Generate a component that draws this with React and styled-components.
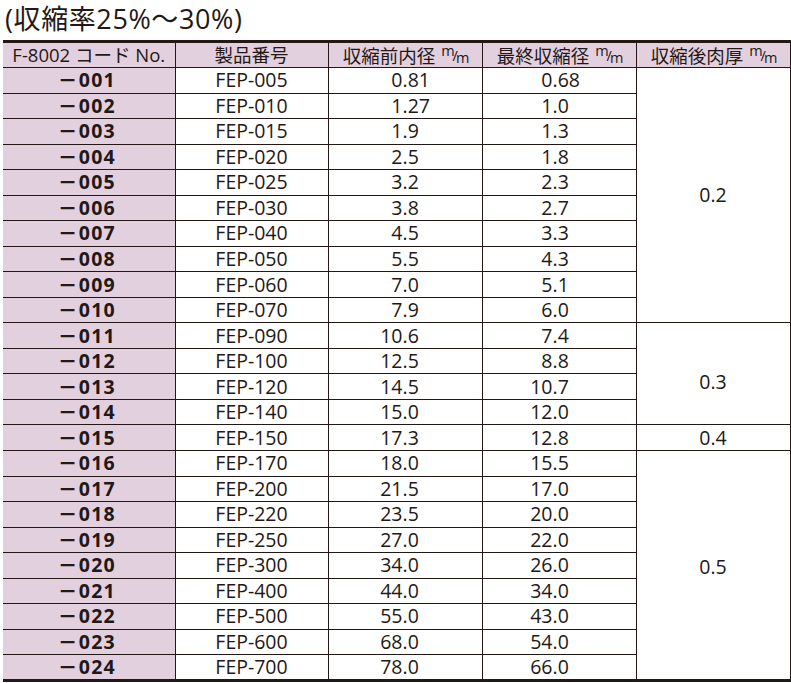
import { createGlobalStyle } from "styled-components";
import styled from "styled-components";

const rows = [
  ["001", "005", "0.81", "0.68"],
  ["002", "010", "1.27", "1.0"],
  ["003", "015", "1.9", "1.3"],
  ["004", "020", "2.5", "1.8"],
  ["005", "025", "3.2", "2.3"],
  ["006", "030", "3.8", "2.7"],
  ["007", "040", "4.5", "3.3"],
  ["008", "050", "5.5", "4.3"],
  ["009", "060", "7.0", "5.1"],
  ["010", "070", "7.9", "6.0"],
  ["011", "090", "10.6", "7.4"],
  ["012", "100", "12.5", "8.8"],
  ["013", "120", "14.5", "10.7"],
  ["014", "140", "15.0", "12.0"],
  ["015", "150", "17.3", "12.8"],
  ["016", "170", "18.0", "15.5"],
  ["017", "200", "21.5", "17.0"],
  ["018", "220", "23.5", "20.0"],
  ["019", "250", "27.0", "22.0"],
  ["020", "300", "34.0", "26.0"],
  ["021", "400", "44.0", "34.0"],
  ["022", "500", "55.0", "43.0"],
  ["023", "600", "68.0", "54.0"],
  ["024", "700", "78.0", "66.0"],
];

// wall thickness groups: first row index -> [span, value, extra top padding]
const thickness = {
  0: [10, "0.2", 0],
  10: [4, "0.3", 16],
  14: [1, "0.4", 0],
  15: [9, "0.5", 4],
};

const GlobalStyle = createGlobalStyle`
  body {
    margin: 0;
    background: #fff;
    color: #231815;
    font-family: "Open Sans", "Noto Sans CJK JP", sans-serif;
  }
`;

const Page = styled.div`
  width: 791px;
  height: 683px;
  overflow: hidden;
`;

const Title = styled.h1`
  margin: 0;
  height: 40px;
  padding-left: 5px;
  font-size: 27px;
  font-weight: 400;
  line-height: 38px;
  letter-spacing: 0.6px;
`;

const Table = styled.table`
  margin-left: 3px;
  width: 787px;
  table-layout: fixed;
  border-collapse: collapse;
  border-top: 3px solid #231815;
  border-bottom: 3px solid #231815;
  font-size: 19.5px;
`;

const HeadCell = styled.th`
  height: 24px;
  padding: 0;
  background: #e3d0df;
  font-weight: 400;
  font-size: 18.5px;
  line-height: 22px;
  text-align: center;
  white-space: nowrap;
  border-left: ${({ $first }) => ($first ? "none" : "1px solid #231815")};
  border-right: 1px solid #231815;
  border-bottom: 1px solid #231815;
`;

const Row = styled.tr`
  height: 25.54px;
`;

const Cell = styled.td`
  padding: 0;
  line-height: 22px;
  text-align: center;
  border: 1px solid #231815;
  white-space: nowrap;
`;

const CodeCell = styled(Cell)`
  border-left: none;
  background: #e3d0df;
  font-weight: 700;
  letter-spacing: 1.2px;
`;

const Dash = styled.span`
  display: inline-block;
  transform: scaleX(1.45);
  margin: 0 6px 0 0;
  letter-spacing: 0;
`;

const NumCell = styled(Cell)`
  text-align: left;
  padding-left: ${({ $pad }) => $pad}px;
`;

const ThickCell = styled(Cell)`
  padding-top: ${({ $shift }) => $shift}px;
`;

const Int = styled.span`
  display: inline-block;
  width: 50px;
  text-align: right;
`;

const Unit = styled.span`
  display: inline-block;
  margin-left: 6px;
  font-size: 14.5px;
  line-height: 1;
  vertical-align: 2px;
  letter-spacing: -2px;
`;

const Up = styled.span`
  vertical-align: 5px;
`;

const Down = styled.span`
  vertical-align: -2px;
`;

const Mm = () => (
  <Unit>
    <Up>m</Up>/<Down>m</Down>
  </Unit>
);

const Num = ({ value }) => {
  const [i, f] = value.split(".");
  return (
    <>
      <Int>{i}</Int>.{f}
    </>
  );
};

export default function App() {
  return (
    <Page>
      <GlobalStyle />
      <Title>(収縮率25%～30%)</Title>
      <Table>
        <colgroup>
          <col style={{ width: 172 }} />
          <col style={{ width: 153 }} />
          <col style={{ width: 154 }} />
          <col style={{ width: 154 }} />
          <col style={{ width: 154 }} />
        </colgroup>
        <thead>
          <tr>
            <HeadCell $first>F-8002 コード No.</HeadCell>
            <HeadCell>製品番号</HeadCell>
            <HeadCell>
              収縮前内径
              <Mm />
            </HeadCell>
            <HeadCell>
              最終収縮径
              <Mm />
            </HeadCell>
            <HeadCell>
              収縮後肉厚
              <Mm />
            </HeadCell>
          </tr>
        </thead>
        <tbody>
          {rows.map(([code, fep, before, after], idx) => (
            <Row key={code}>
              <CodeCell>
                <Dash>−</Dash>
                {code}
              </CodeCell>
              <Cell>FEP-{fep}</Cell>
              <NumCell $pad={24}>
                <Num value={before} />
              </NumCell>
              <NumCell $pad={20}>
                <Num value={after} />
              </NumCell>
              {thickness[idx] && (
                <ThickCell rowSpan={thickness[idx][0]} $shift={thickness[idx][2]}>
                  {thickness[idx][1]}
                </ThickCell>
              )}
            </Row>
          ))}
        </tbody>
      </Table>
    </Page>
  );
}
